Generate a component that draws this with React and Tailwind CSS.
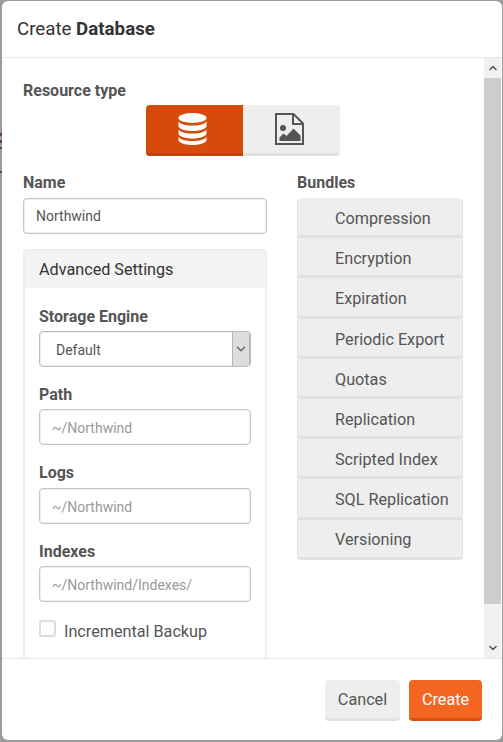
import React from "react";
import { ChevronDown, ChevronUp } from "lucide-react";

const bundles = [
  "Compression",
  "Encryption",
  "Expiration",
  "Periodic Export",
  "Quotas",
  "Replication",
  "Scripted Index",
  "SQL Replication",
  "Versioning",
];

const Label = ({ children, className = "" }) => (
  <div className={`text-base leading-[18px] font-bold text-[#555] ${className}`}>{children}</div>
);

const TextField = ({ value, muted }) => (
  <div
    className={`h-9 flex items-center rounded-[4px] border border-[#c6c6c6] bg-white pl-[12px] text-sm shadow-[inset_0_0_0_1px_#eeeeee] ${
      muted ? "pt-[2px] text-[#999]" : "text-[#555]"
    }`}
  >
    {value}
  </div>
);

const DatabaseIcon = () => (
  <svg width="29" height="32" viewBox="0 0 29 32" fill="white">
    <ellipse cx="14.5" cy="5" rx="14" ry="5" />
    <path d="M.5 8.5C3 11.5 8 12.6 14.5 12.6S26 11.5 28.5 8.5V13c0 2.800-6.300 5-14 5S.5 15.800.5 13z" />
    <path d="M.5 16.500C3 19.500 8 20.600 14.500 20.600S26 19.500 28.500 16.500V20.500c0 2.800-6.300 5-14 5S.5 23.300.5 20.500z" />
    <path d="M.5 24C3 27 8 28 14.500 28S26 27 28.500 24V27c0 2.800-6.300 5-14 5S.5 29.800.5 27z" />
  </svg>
);

const ImageFileIcon = () => (
  <svg width="29" height="32" viewBox="0 0 29 32" fill="none">
    <path d="M1 1H18.500L28 10.500V31H1Z" stroke="#555" strokeWidth="2" />
    <path d="M18 1V11H28" stroke="#555" strokeWidth="2" />
    <circle cx="8" cy="15" r="3" fill="#555" />
    <path d="M4.500 28V24.500L8.500 20.500L11.500 23L18.500 15.500L25.500 22.500V28Z" fill="#555" />
  </svg>
);

export default function App() {
  return (
    <div className="relative h-[742px] w-[503px] overflow-hidden bg-[#9b9b9b] pt-px pl-[2px] font-['Roboto',sans-serif]">
      {/* bits of the page behind the backdrop */}
      <div className="absolute top-[133px] left-0 h-[3px] w-[2px] bg-[#6b3a5a]" />
      <div className="absolute top-[140px] left-0 h-[3px] w-[2px] bg-[#6b3a5a]" />
      <div className="absolute top-[147px] left-0 h-[2px] w-[2px] bg-[#6b3a5a]" />
      <div className="absolute top-[171px] left-0 h-[2px] w-[2px] bg-[#7a3a3a]" />

      <div className="flex h-[739px] w-[500px] flex-col overflow-hidden rounded-[6px] bg-white">
        {/* header */}
        <div className="flex h-[57px] shrink-0 items-center border-b border-[#e8e8e8] pl-[15px] text-[18.72px] text-[#333]">
          Create&nbsp;<span className="font-bold">Database</span>
        </div>

        {/* body */}
        <div className="flex h-[600px] shrink-0 pr-px">
          <div className="min-w-0 flex-1 overflow-hidden pt-[24px] pl-[21px]">
            <Label>Resource type</Label>
            <div className="mt-[5px] ml-[123px] flex h-[51px] w-[194px] overflow-hidden rounded-[4px]">
              <div className="flex w-[97px] items-center justify-center border-b-[3px] border-[#bd4409] bg-[#d74b0a] pr-[4px]">
                <DatabaseIcon />
              </div>
              <div className="flex w-[97px] items-center justify-center border-b-[3px] border-[#e0e0e0] bg-[#eee] pr-[4px]">
                <ImageFileIcon />
              </div>
            </div>

            <div className="mt-[18px] flex gap-[30px]">
              <div className="w-[244px] shrink-0">
                <Label>Name</Label>
                <div className="mt-[6px]">
                  <TextField value="Northwind" />
                </div>

                <div className="mt-[15px] rounded-t-[4px] border-x-2 border-t-2 border-[#eee]">
                  <div className="flex h-[37px] items-center bg-[#f4f4f4] pt-[2px] pl-[14px] text-[16.2px] text-[#333]">
                    Advanced Settings
                  </div>
                  <div className="px-[14px] pt-[20px] pb-[40px]">
                    <Label>Storage Engine</Label>
                    <div className="mt-[5px] flex h-9 items-stretch overflow-hidden rounded-[4px] border border-[#bdbdbd] bg-white text-sm text-[#555] shadow-[inset_0_0_0_1px_#eeeeee]">
                      <div className="flex flex-1 items-center pt-[2px] pl-[16px]">Default</div>
                      <div className="flex w-[18px] items-center justify-center border-x border-[#b5b5b5] bg-[#ddd]">
                        <ChevronDown size={14} strokeWidth={2.5} color="#666" />
                      </div>
                    </div>

                    <Label className="mt-[19px]">Path</Label>
                    <div className="mt-[5px]">
                      <TextField value="~/Northwind" muted />
                    </div>

                    <Label className="mt-[19px]">Logs</Label>
                    <div className="mt-[6px]">
                      <TextField value="~/Northwind" muted />
                    </div>

                    <Label className="mt-[19px]">Indexes</Label>
                    <div className="mt-[5px]">
                      <TextField value="~/Northwind/Indexes/" muted />
                    </div>

                    <div className="mt-[18px] flex items-start gap-[8px]">
                      <div className="h-[17px] w-[17px] rounded-[3px] border-2 border-[#ddd] bg-white" />
                      <span className="pt-[2px] text-[16.2px] leading-5 text-[#555]">Incremental Backup</span>
                    </div>
                  </div>
                </div>
              </div>

              <div className="w-[166px] shrink-0">
                <Label>Bundles</Label>
                <div className="mt-[6px] overflow-hidden rounded-[4px] border-x border-[#e4e4e4]">
                  {bundles.map((name) => (
                    <div
                      key={name}
                      className="flex h-[40.2px] items-center border-b-[3px] border-[#e2e2e2] bg-[#eee] pt-[5px] pl-[37px] text-[16.2px] text-[#555]"
                    >
                      {name}
                    </div>
                  ))}
                </div>
              </div>
            </div>
          </div>

          {/* scrollbar */}
          <div className="flex w-[17px] shrink-0 flex-col bg-[#f1f1f1]">
            <div className="flex h-[20px] items-center justify-center">
              <ChevronUp size={12} strokeWidth={3} color="#505050" />
            </div>
            <div className="h-[526px] bg-[#cdcdcd]" />
            <div className="flex-1" />
            <div className="flex h-[20px] items-center justify-center">
              <ChevronDown size={12} strokeWidth={3} color="#505050" />
            </div>
          </div>
        </div>

        {/* footer */}
        <div className="flex flex-1 items-start justify-end gap-[9px] border-t border-[#e8e8e8] pt-[21px] pr-[20px]">
          <div className="flex h-[41px] w-[75px] items-center justify-center rounded-[4px] border-b-[3px] border-[#e0e0e0] bg-[#eee] pt-[2px] text-[16.2px] text-[#555]">
            Cancel
          </div>
          <div className="flex h-[41px] w-[73px] items-center justify-center rounded-[4px] border-b-[3px] border-[#d74f0f] bg-[#f46522] pt-[2px] text-[16.2px] text-white">
            Create
          </div>
        </div>
      </div>
    </div>
  );
}
